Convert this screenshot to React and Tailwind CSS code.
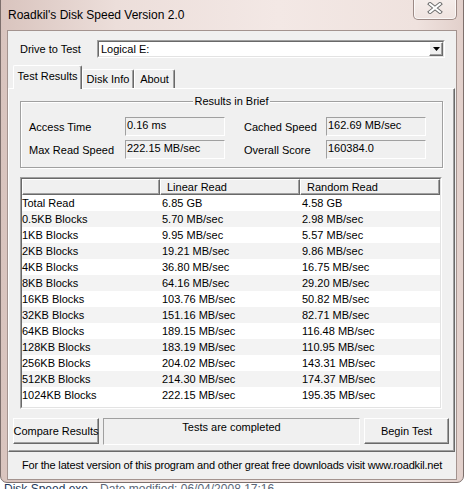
import React from "react";

const rows = [
  ["Total Read", "6.85 GB", "4.58 GB"],
  ["0.5KB Blocks", "5.70 MB/sec", "2.98 MB/sec"],
  ["1KB Blocks", "9.95 MB/sec", "5.57 MB/sec"],
  ["2KB Blocks", "19.21 MB/sec", "9.86 MB/sec"],
  ["4KB Blocks", "36.80 MB/sec", "16.75 MB/sec"],
  ["8KB Blocks", "64.16 MB/sec", "29.20 MB/sec"],
  ["16KB Blocks", "103.76 MB/sec", "50.82 MB/sec"],
  ["32KB Blocks", "151.16 MB/sec", "82.71 MB/sec"],
  ["64KB Blocks", "189.15 MB/sec", "116.48 MB/sec"],
  ["128KB Blocks", "183.19 MB/sec", "110.95 MB/sec"],
  ["256KB Blocks", "204.02 MB/sec", "143.31 MB/sec"],
  ["512KB Blocks", "214.30 MB/sec", "174.37 MB/sec"],
  ["1024KB Blocks", "222.15 MB/sec", "195.35 MB/sec"],
];

function ReadBox({ value }) {
  return (
    <div className="w-[100px] h-[19px] border border-t-[#a0a0a0] border-l-[#a0a0a0] border-b-white border-r-white bg-[#f0f0f0] pl-[1px] pt-[1px] leading-[13px]">
      {value}
    </div>
  );
}

function Button({ children, w }) {
  return (
    <div
      className={`${w} h-[26px] flex items-center justify-center whitespace-nowrap bg-[#f0f0f0] border border-t-white border-l-white border-b-[#696969] border-r-[#696969] shadow-[inset_-1px_-1px_0_#a0a0a0]`}
    >
      {children}
    </div>
  );
}

export default function App() {
  return (
    <div className="w-[466px] h-[489px] overflow-hidden bg-white font-['Liberation_Sans',Arial,sans-serif] text-[11px] text-black">
      {/* Window */}
      <div className="-mt-[8px] w-[464px] h-[491px] rounded-[7px] border border-[#7d6f6c] bg-[linear-gradient(to_right,#d9c4be,#ecdeda_25%,#f3e8e5_60%,#efe2de_90%,#e2d0cb)] flex flex-col">
        {/* Title bar */}
        <div className="h-[37px] flex items-start justify-between">
          <div className="mt-[15px] ml-[7px] text-[12px] leading-[15px]">Roadkil's Disk Speed Version 2.0</div>
          <div className="mr-[6px] w-[44px] h-[27px] border border-t-0 border-[#9c8985] rounded-b-[5px] bg-[linear-gradient(to_bottom,#f7f0ee,#efe3e0)] flex items-end justify-center pb-[5px] shadow-[inset_0_0_0_1px_rgba(255,255,255,0.7)]">
            <svg width="16" height="12" viewBox="0 0 16 12">
              <path d="M3 2 L13 10 M13 2 L3 10" stroke="#6d6d6d" strokeWidth="4" strokeLinecap="square" />
              <path d="M3 2 L13 10 M13 2 L3 10" stroke="#ffffff" strokeWidth="2" strokeLinecap="square" />
            </svg>
          </div>
        </div>

        {/* Client area */}
        <div className="ml-[6px] w-[450px] h-[450px] border border-[#a3938f] bg-[#f0f0f0] flex flex-col">
          {/* Drive row */}
          <div className="mt-[9px] h-[18px] flex items-center">
            <div className="w-[89px] pl-[12px] leading-[13px]">Drive to Test</div>
            <div className="w-[348px] h-[18px] border border-t-[#a0a0a0] border-l-[#a0a0a0] border-b-white border-r-white">
              <div className="h-full border border-t-[#696969] border-l-[#696969] border-b-[#e3e3e3] border-r-[#e3e3e3] bg-white flex items-center justify-between">
                <span className="pl-[2px] leading-[13px]">Logical E:</span>
                <div className="w-[14px] h-[14px] bg-[#f0f0f0] border border-t-white border-l-white border-b-[#696969] border-r-[#696969] shadow-[inset_-1px_-1px_0_#a0a0a0] flex items-center justify-center">
                  <svg width="7" height="4" viewBox="0 0 7 4">
                    <path d="M0 0 H7 L3.5 4 Z" fill="#000" />
                  </svg>
                </div>
              </div>
            </div>
          </div>

          {/* Tabs */}
          <div className="mt-[6px] h-[24px] pl-[5px] flex items-end">
            <div className="relative z-10 -mb-[1px] w-[69px] h-[24px] bg-[#f0f0f0] border border-b-0 border-t-white border-l-white border-r-[#696969] rounded-t-[2px] shadow-[inset_-1px_0_0_#a0a0a0] pt-[4px] text-center leading-[13px] whitespace-nowrap">
              Test Results
            </div>
            <div className="w-[52px] h-[19px] bg-[#f0f0f0] border border-b-0 border-t-white border-l-white border-r-[#696969] rounded-t-[2px] shadow-[inset_-1px_0_0_#a0a0a0] flex items-center justify-center leading-[13px] whitespace-nowrap">
              Disk Info
            </div>
            <div className="w-[41px] h-[19px] bg-[#f0f0f0] border border-b-0 border-t-white border-l-white border-r-[#696969] rounded-t-[2px] shadow-[inset_-1px_0_0_#a0a0a0] flex items-center justify-center leading-[13px] whitespace-nowrap">
              About
            </div>
          </div>

          {/* Panel */}
          <div className="w-[447px] h-[364px] border border-t-white border-l-white border-r-[#696969] border-b-[#696969] shadow-[inset_-1px_-1px_0_#a0a0a0] flex flex-col">
            {/* Group box */}
            <div className="relative ml-[11px] mt-[12px] w-[423px] h-[67px] border border-[#a0a0a0] shadow-[inset_1px_1px_0_white,1px_1px_0_white]">
              <div className="absolute left-0 right-0 -top-[7px] flex justify-center">
                <span className="bg-[#f0f0f0] px-[2px] leading-[13px]">Results in Brief</span>
              </div>
              <div className="pt-[15px] pl-[8px] flex flex-col gap-[4px]">
                <div className="flex items-center h-[19px]">
                  <div className="w-[96px] leading-[13px] pt-[1px]">Access Time</div>
                  <ReadBox value="0.16 ms" />
                  <div className="w-[19px]" />
                  <div className="w-[82px] leading-[13px] pt-[1px]">Cached Speed</div>
                  <ReadBox value="162.69 MB/sec" />
                </div>
                <div className="flex items-center h-[19px]">
                  <div className="w-[96px] leading-[13px] pt-[1px]">Max Read Speed</div>
                  <ReadBox value="222.15 MB/sec" />
                  <div className="w-[19px]" />
                  <div className="w-[82px] leading-[13px] pt-[1px]">Overall Score</div>
                  <ReadBox value="160384.0" />
                </div>
              </div>
            </div>

            {/* List view */}
            <div className="ml-[11px] mt-[9px] w-[422px] h-[232px] border border-t-[#a0a0a0] border-l-[#a0a0a0] border-b-white border-r-white">
              <div className="h-full border border-t-[#696969] border-l-[#696969] border-b-[#e3e3e3] border-r-[#e3e3e3] bg-white flex flex-col">
                <div className="h-[16px] flex bg-[#f0f0f0]">
                  <div className="w-[138px] h-[16px] border border-t-white border-l-white border-b-[#696969] border-r-[#696969] shadow-[inset_-1px_-1px_0_#a0a0a0]" />
                  <div className="w-[140px] h-[16px] border border-t-white border-l-white border-b-[#696969] border-r-[#696969] shadow-[inset_-1px_-1px_0_#a0a0a0] pl-[6px] leading-[14px]">
                    Linear Read
                  </div>
                  <div className="w-[140px] h-[16px] border border-t-white border-l-white border-b-[#696969] border-r-[#696969] shadow-[inset_-1px_-1px_0_#a0a0a0] pl-[6px] leading-[14px]">
                    Random Read
                  </div>
                </div>
                {rows.map((r, i) => (
                  <div key={r[0]} className={`h-[16px] flex leading-[17px] ${i % 2 === 1 ? "bg-[#f3f3f3]" : "bg-white"}`}>
                    <div className="w-[138px]">{r[0]}</div>
                    <div className="w-[140px] pl-[2px]">{r[1]}</div>
                    <div className="w-[140px] pl-[2px]">{r[2]}</div>
                  </div>
                ))}
              </div>
            </div>

            {/* Buttons row */}
            <div className="mt-[9px] ml-[4px] flex items-start gap-[4px]">
              <Button w="w-[86px]">Compare Results</Button>
              <div className="w-[257px] h-[27px] border border-t-[#a0a0a0] border-l-[#a0a0a0] border-b-white border-r-white text-center pt-[2px] leading-[13px]">
                Tests are completed
              </div>
              <Button w="w-[85px]">Begin Test</Button>
            </div>
          </div>

          {/* Status bar */}
          <div className="h-[27px] flex items-center justify-center leading-[13px] whitespace-nowrap tracking-[-0.18px]">
            For the latest version of this program and other great free downloads visit www.roadkil.net
          </div>
        </div>
      </div>

      {/* Explorer text behind */}
      <div className="-mt-[1px] pl-[4px] text-[12px] leading-[15px] whitespace-nowrap">
        <span className="text-[#1e395b]">Disk Speed.exe</span>
        <span className="ml-[12px] text-[#5a6779]">Date modified: 06/04/2008 17:16</span>
      </div>
    </div>
  );
}
